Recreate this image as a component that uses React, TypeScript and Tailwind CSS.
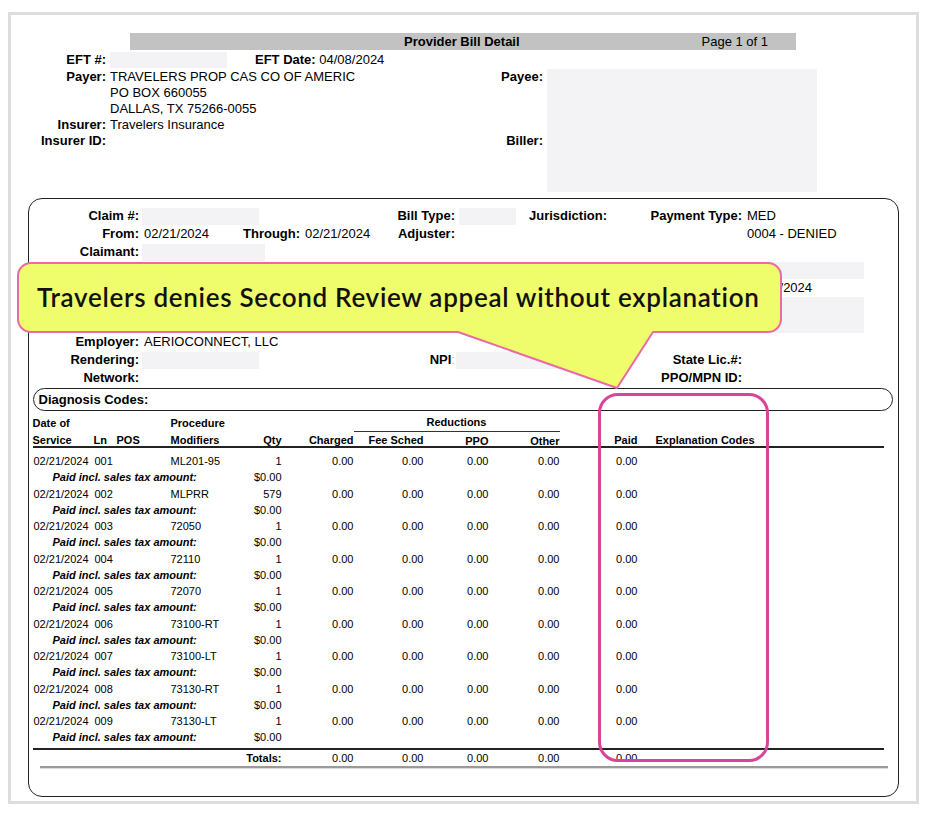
import React from 'react';

const lines = [
  { ln: '001', proc: 'ML201-95', qty: '1' },
  { ln: '002', proc: 'MLPRR', qty: '579' },
  { ln: '003', proc: '72050', qty: '1' },
  { ln: '004', proc: '72110', qty: '1' },
  { ln: '005', proc: '72070', qty: '1' },
  { ln: '006', proc: '73100-RT', qty: '1' },
  { ln: '007', proc: '73100-LT', qty: '1' },
  { ln: '008', proc: '73130-RT', qty: '1' },
  { ln: '009', proc: '73130-LT', qty: '1' },
];

const grid = 'grid grid-cols-[57px_25px_55px_75px_37px_72px_70px_65px_71px_78px_1fr]';

function Redacted({ w, h = 17 }: { w: number; h?: number }) {
  return <div className="bg-[#f3f3f5] shrink-0" style={{ width: w, height: h }} />;
}

function ClaimRow({ label, mid, right, rightLabel, value, start }: {
  label?: string;
  mid?: React.ReactNode;
  right?: React.ReactNode;
  rightLabel?: string;
  value?: React.ReactNode;
  start?: boolean;
}) {
  return (
    <div className={`flex h-[18px] ${start ? 'items-start' : 'items-center'}`}>
      <div className="w-[110px] text-right font-bold shrink-0">{label}</div>
      <div className="w-[316px] flex items-center shrink-0">{mid}</div>
      <div className="w-[287px] flex items-center shrink-0">
        {right}
        {rightLabel && <span className="ml-auto font-bold">{rightLabel}</span>}
      </div>
      <div className="ml-[5px] flex items-center">{value}</div>
    </div>
  );
}

export default function App() {
  return (
    <div className="relative w-[936px] h-[816px] bg-white overflow-hidden text-black font-['Liberation_Sans',Arial,sans-serif]">
      <div className="ml-[8px] mt-[12px] w-[911px] h-[792px] border-[3px] border-[#dddddd]">
        {/* Title bar */}
        <div className="mt-[18px] ml-[119px] w-[666px] h-[17px] bg-[#c2c2c2] flex items-center text-[13px]">
          <span className="ml-[274px] font-bold">Provider Bill Detail</span>
          <span className="ml-auto mr-[28px]">Page 1 of 1</span>
        </div>

        {/* EFT row */}
        <div className="flex items-center h-[17px] mt-[1px] text-[13px]">
          <div className="w-[95px] text-right font-bold">EFT #:</div>
          <div className="ml-[4px]"><Redacted w={117} h={16} /></div>
          <div className="ml-[28px]"><span className="font-bold">EFT Date:</span> 04/08/2024</div>
        </div>

        {/* Payer / Payee */}
        <div className="flex mt-[1px] text-[13px] leading-[16px]">
          <div className="w-[459px] shrink-0">
            <div className="flex">
              <div className="w-[95px] text-right font-bold shrink-0">Payer:</div>
              <div className="ml-[4px]">
                <div>TRAVELERS PROP CAS CO OF AMERIC</div>
                <div>PO BOX 660055</div>
                <div>DALLAS, TX 75266-0055</div>
              </div>
            </div>
            <div className="flex">
              <div className="w-[95px] text-right font-bold shrink-0">Insurer:</div>
              <div className="ml-[4px]">Travelers Insurance</div>
            </div>
            <div className="flex">
              <div className="w-[95px] text-right font-bold shrink-0">Insurer ID:</div>
            </div>
          </div>
          <div className="flex">
            <div className="w-[73px] text-right font-bold">
              <div>Payee:</div>
              <div className="h-[48px]" />
              <div>Biller:</div>
            </div>
            <div className="ml-[4px]"><Redacted w={270} h={123} /></div>
          </div>
        </div>

        {/* Claim box */}
        <div className="mt-[6px] ml-[17px] w-[871px] h-[599px] border-[1.5px] border-[#222] rounded-[14px] pt-[8px] text-[13px]">
          <ClaimRow
            label="Claim #:"
            mid={<><div className="ml-[3px]"><Redacted w={117} /></div><span className="ml-auto font-bold">Bill Type:</span></>}
            right={<><div className="ml-[4px]"><Redacted w={57} /></div><span className="ml-[13px] font-bold">Jurisdiction:</span></>}
            rightLabel="Payment Type:"
            value="MED"
          />
          <ClaimRow
            label="From:"
            mid={<><span className="ml-[5px] w-[99px]">02/21/2024</span><span className="font-bold">Through:</span><span className="ml-[5px]">02/21/2024</span><span className="ml-auto font-bold">Adjuster:</span></>}
            value="0004 - DENIED"
          />
          <ClaimRow label="Claimant:" mid={<div className="ml-[3px]"><Redacted w={123} /></div>} />
          {/* rows below sit under the callout */}
          <ClaimRow value={<Redacted w={117} />} />
          <ClaimRow value="03/25/2024" />
          <ClaimRow value={<Redacted w={117} h={36} />} start />
          <ClaimRow />
          <ClaimRow label="Employer:" mid={<span className="ml-[5px]">AERIOCONNECT, LLC</span>} />
          <ClaimRow
            label="Rendering:"
            mid={<><div className="ml-[3px]"><Redacted w={117} /></div><span className="ml-auto font-bold">NPI<span className="text-[#bbb] font-normal">:</span></span></>}
            right={<div className="ml-[1px]"><Redacted w={110} /></div>}
            rightLabel="State Lic.#:"
          />
          <ClaimRow label="Network:" rightLabel="PPO/MPN ID:" />

          {/* Diagnosis codes */}
          <div className="mt-[1px] ml-[3.5px] w-[860px] h-[23px] border-[1.5px] border-[#222] rounded-full flex items-center pl-[5px] font-bold">
            Diagnosis Codes:
          </div>

          {/* Line table */}
          <div className="mt-[3px] ml-[3.5px] w-[851px] text-[11px]">
            <div className={`${grid} h-[17px] items-end font-bold`}>
              <div>Date of</div>
              <div />
              <div />
              <div className="pl-[1px]">Procedure</div>
              <div />
              <div />
              <div className="col-span-3 h-full flex items-end justify-center border-b-[1.5px] border-[#333]">Reductions</div>
            </div>
            <div className={`${grid} h-[15px] items-center font-bold border-b-2 border-[#222] box-content`}>
              <div>Service</div>
              <div className="pl-[4px]">Ln</div>
              <div className="pl-[2px]">POS</div>
              <div className="pl-[1px]">Modifiers</div>
              <div className="text-right">Qty</div>
              <div className="text-right">Charged</div>
              <div className="text-right">Fee Sched</div>
              <div className="text-right pt-[2px]">PPO</div>
              <div className="text-right pt-[2px]">Other</div>
              <div className="text-right">Paid</div>
              <div className="pl-[18px]">Explanation Codes</div>
            </div>

            <div className="mt-[5px]">
              {lines.map(l => (
                <div key={l.ln}>
                  <div className={`${grid} h-[16.25px] items-center`}>
                    <div className="pl-[1px]">02/21/2024</div>
                    <div className="pl-[5px]">{l.ln}</div>
                    <div />
                    <div className="pl-[1px]">{l.proc}</div>
                    <div className="text-right">{l.qty}</div>
                    <div className="text-right">0.00</div>
                    <div className="text-right">0.00</div>
                    <div className="text-right">0.00</div>
                    <div className="text-right">0.00</div>
                    <div className="text-right">0.00</div>
                    <div />
                  </div>
                  <div className={`${grid} h-[16.25px] items-center`}>
                    <div className="col-span-4 pl-[20px] font-bold italic">Paid incl. sales tax amount:</div>
                    <div className="text-right">$0.00</div>
                  </div>
                </div>
              ))}
            </div>

            <div className={`${grid} mt-[2px] h-[16px] items-center border-t-2 border-[#222] box-content`}>
              <div className="col-span-5 text-right font-bold">Totals:</div>
              <div className="text-right">0.00</div>
              <div className="text-right">0.00</div>
              <div className="text-right">0.00</div>
              <div className="text-right">0.00</div>
              <div className="text-right">0.00</div>
              <div />
            </div>
            <div className="ml-[7px] w-[848px] h-[2px] bg-[#9a9a9a] shadow-[0_1px_1px_rgba(0,0,0,0.15)]" />
          </div>
        </div>
      </div>

      {/* Highlight around Paid column */}
      <div className="absolute left-[598px] top-[393px] w-[171px] h-[369px] border-[3.5px] border-[#d8449a] rounded-[20px]" />

      {/* Callout */}
      <svg className="absolute left-[17px] top-[262px]" width="766" height="128" viewBox="0 0 766 128">
        <path
          d="M 14 1 H 751 A 13 13 0 0 1 764 14 V 57 A 13 13 0 0 1 751 70 H 636 L 600 126 L 441 70 H 14 A 13 13 0 0 1 1 57 V 14 A 13 13 0 0 1 14 1 Z"
          fill="#effc6b"
          stroke="#e96aa7"
          strokeWidth="2"
          strokeLinejoin="round"
        />
      </svg>
      <div className="absolute left-[37px] top-[284px] text-[26px] leading-[26px] font-semibold tracking-[0.7px] text-[#111] font-['Lato',sans-serif] whitespace-nowrap">
        Travelers denies Second Review appeal without explanation
      </div>
    </div>
  );
}
